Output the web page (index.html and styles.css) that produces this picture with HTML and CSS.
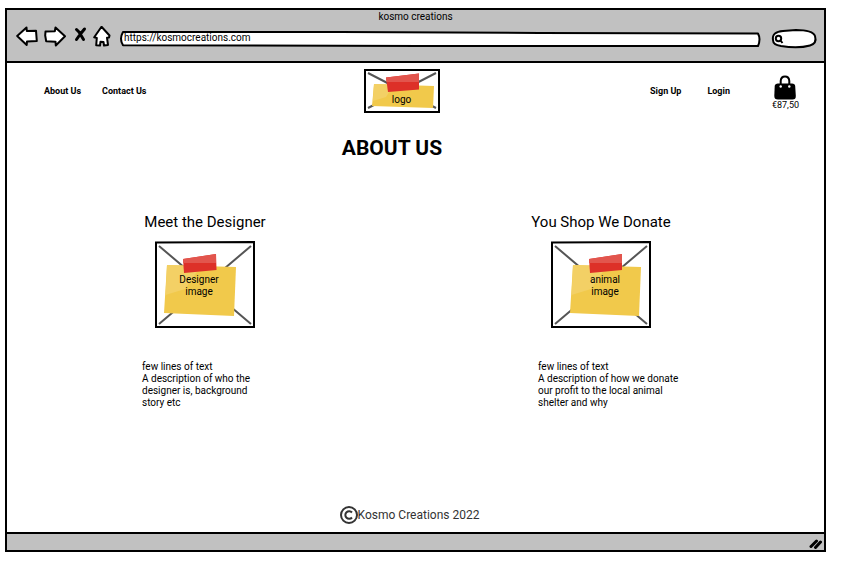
FILE: index.html
```html
<!DOCTYPE html>
<html lang="en">
<head>
<meta charset="utf-8">
<meta name="viewport" content="width=device-width, initial-scale=1">
<title>kosmo creations</title>
<link rel="stylesheet" href="styles.css">
</head>
<body>
<div class="window">
  <div class="chrome">
    <div class="window-title">kosmo creations</div>
    <div class="toolbar">
      <button class="tool" type="button" aria-label="Back">
        <svg width="22" height="22" viewBox="0 0 22 22"><path d="M1.2 10 10.500 1.500 10.800 5 20 4.700 20.800 15 11 15.500 10.700 19Z"/></svg>
      </button>
      <button class="tool" type="button" aria-label="Forward">
        <svg width="22" height="22" viewBox="0 0 22 22"><path d="M1.500 5.500 10.800 5.300 11.500 1.500 21 10.300 11.800 19.500 11.500 15.700 2.200 15.300 1.200 9.500Z"/></svg>
      </button>
      <button class="tool tool-stop" type="button" aria-label="Stop">
        <svg width="14" height="22" viewBox="0 0 14 22"><path class="cross" d="M2.500 3.500 5 6 9.500 13.500M10.500 3 6 8.500 2.500 13.500"/></svg>
      </button>
      <button class="tool" type="button" aria-label="Home">
        <svg width="18" height="22" viewBox="0 0 18 22"><path d="M8.500 .8 16.500 9.500 16 11.500 14 11.700 15 19 11 19.500 10.500 16 7.500 15.700 7 19.500 3.200 19.300 3.800 12 1.200 11.300Z"/></svg>
      </button>
      <div class="address">
        <svg class="outline" viewBox="0 0 641 16" preserveAspectRatio="none"><path d="M3 1 220 1 420 2 638 2.500Q641 8 638 15L300 15 3 14.200Q-1 8 3 1Z"/></svg>
        <input class="address-input" type="text" aria-label="Address" value="https://kosmocreations.com">
      </div>
      <div class="search">
        <svg class="outline" viewBox="0 0 46 20"><path d="M2 11C1 5 5 2.500 12 2L25 1C34 1 42 2 44 7 45.500 12 44 15 39 16.500 30 19 19 18.500 10 17 5 16 2 15 2 11Z"/><circle cx="7.500" cy="9.500" r="2.700"/><path d="M9.500 11.500 11.500 14"/></svg>
        <input class="search-input" type="search" aria-label="Search">
      </div>
    </div>
  </div>

  <header class="site-header">
    <nav class="links" aria-label="Pages">
      <a href="#about">About Us</a>
      <a href="#contact">Contact Us</a>
    </nav>
    <a class="picture logo" href="#home">
      <svg class="drawing" viewBox="0 0 76 44">
        <rect class="frame" x="1" y="1" width="74" height="42"/>
        <path class="cross-line" d="M4 4 72 39M72 4 4 39"/>
        <path class="note" d="M10 15 70 17 69 39 8 37Z"/>
        <path class="note-light" d="M10 15 30 15.600 22 28 8.800 32Z"/>
        <path class="tape" d="M22 8.500 55 4.500 55 20.500 24 23Z"/>
        <path class="tape-light" d="M22 8.500 55 4.500 55 13 22.500 13Z"/>
      </svg>
      <span class="caption">logo</span>
    </a>
    <nav class="links account" aria-label="Account">
      <a href="#signup">Sign Up</a>
      <a href="#login">Login</a>
      <a class="basket" href="#basket" aria-label="Basket, €87,50">
        <svg width="22" height="26" viewBox="0 0 22 26"><path d="M4 8.500H18Q21 8.500 21.200 11L21.800 21Q22 24.500 18.500 24.500H4Q.2 24.500.300 21L.700 11Q1 8.500 4 8.500Z"/><path class="handle" d="M6.700 10V6Q7 1.500 11 1.500T15.300 6V10"/><circle class="rivet" cx="6.700" cy="11.500" r="1.200"/><circle class="rivet" cx="15.300" cy="11.500" r="1.200"/></svg>
        <span>€87,50</span>
      </a>
    </nav>
  </header>

  <main class="content">
    <h1>ABOUT US</h1>
    <div class="columns">
      <section class="column">
        <h2>Meet the Designer</h2>
        <div class="picture designer">
          <svg class="drawing" viewBox="0 0 100 87">
            <path class="frame" d="M1 1.500 99 1 99 86 1 86Z"/>
            <path class="cross-line" d="M4 5 96 83M96 5 4 83"/>
            <path class="note" d="M12 24 81 26 79 75 9 72Z"/>
            <path class="note-light" d="M12 24 46 25 30 48 10.500 54Z"/>
            <path class="tape" d="M28 18 61 13 61.500 29 29 32Z"/>
            <path class="tape-light" d="M28 18 61 13 61 22 28 22Z"/>
          </svg>
          <span class="caption">Designer<br>image</span>
        </div>
        <p>few lines of text<br>A description of who the<br>designer is, background<br>story etc</p>
      </section>
      <section class="column">
        <h2>You Shop We Donate</h2>
        <div class="picture animal">
          <svg class="drawing" viewBox="0 0 100 87">
            <path class="frame" d="M1 1.500 99 1 99 86 1 86Z"/>
            <path class="cross-line" d="M4 5 96 83M96 5 4 83"/>
            <path class="note" d="M22 24 90 26 88 75 19 72Z"/>
            <path class="note-light" d="M22 24 56 25 40 48 20.500 54Z"/>
            <path class="tape" d="M38 18 71 13 71 29 39 32Z"/>
            <path class="tape-light" d="M38 18 71 13 71 22 38 22Z"/>
          </svg>
          <span class="caption">animal<br>image</span>
        </div>
        <p>few lines of text<br>A description of how we donate<br>our profit to the local animal<br>shelter and why</p>
      </section>
    </div>
  </main>

  <footer class="site-footer">
    <svg width="18" height="18" viewBox="0 0 18 18"><circle cx="9" cy="9" r="8"/><path d="M12 6.500A3.800 3.800 0 1 0 12 11.500"/></svg>
    <span>Kosmo Creations 2022</span>
  </footer>

  <div class="status">
    <svg width="13" height="10" viewBox="0 0 13 10"><path d="M2 7.500 7.500 2M6.500 8.500 11.500 3"/></svg>
  </div>
</div>
</body>
</html>
```

FILE: styles.css
```css
* { box-sizing: border-box; }

body {
  margin: 0;
  padding: 8px 18px 16px 5px;
  min-height: 100vh;
  display: flex;
  background: #fff;
  color: #000;
  font: 10px/12px Roboto, "Liberation Sans", sans-serif;
}

h1, h2, p { margin: 0; }
a { color: inherit; text-decoration: none; }
svg { display: block; }

.window {
  flex: 1;
  display: flex;
  flex-direction: column;
  border: 2px solid #000;
}

.chrome {
  padding-bottom: 12px;
  background: #c1c1c1;
  border-bottom: 2px solid #000;
}

.window-title { line-height: 14px; text-align: center; }

.toolbar {
  display: flex;
  align-items: center;
  padding: 0 7px 0 9px;
}

.tool {
  padding: 0;
  margin-right: 6px;
  border: 0;
  background: none;
}
.tool svg {
  fill: #fff;
  stroke: #000;
  stroke-width: 2;
  stroke-linejoin: round;
  stroke-linecap: round;
}
.tool-stop { margin-left: 2px; margin-right: 5px; }
.tool .cross { fill: none; stroke-width: 3; }

.address, .search { position: relative; height: 16px; }
.address { flex: 1; margin: 5px 10px 0 3px; }
.search { width: 46px; height: 20px; margin-top: 5px; }

.outline {
  position: absolute;
  inset: 0;
  width: 100%;
  height: 100%;
  fill: #fff;
  stroke: #000;
  stroke-width: 2;
  stroke-linejoin: round;
  overflow: visible;
}
.outline circle, .outline circle + path { fill: none; }

.address-input, .search-input {
  position: relative;
  display: block;
  width: 100%;
  height: 100%;
  border: 0;
  background: none;
  color: inherit;
  font: inherit;
  outline: none;
}
.address-input { padding: 0 4px 4px; }
.search-input { padding: 0 6px 0 14px; appearance: none; }

.site-header {
  display: grid;
  grid-template-columns: 8fr 76px 9fr;
  align-items: center;
  padding: 6px 25px 0 37px;
}

.links { display: flex; align-items: center; gap: 21px; font-weight: 700; font-size: 9px; }
.account { justify-content: flex-end; gap: 26px; }

.basket {
  display: flex;
  flex-direction: column;
  align-items: center;
  margin: 1px 0 0 16px;
  font-weight: 400;
  line-height: 8px;
}
.basket .handle { fill: none; stroke: #000; stroke-width: 2; }
.basket .rivet { fill: #fff; }

.picture { display: grid; }
.drawing, .caption { grid-area: 1 / 1; }
.drawing { width: 100%; }
.caption { text-align: center; }
.frame { fill: #fff; stroke: #000; stroke-width: 2; }
.cross-line { fill: none; stroke: #555; stroke-width: 2; }
.note { fill: #f1c94b; }
.note-light { fill: #f3d065; }
.tape { fill: #dd3028; }
.tape-light { fill: #e2554d; }

.logo .caption { padding-top: 25px; }
.designer, .animal { width: 100px; margin: 7px auto 33px; }
.designer .caption, .animal .caption { padding-top: 33px; }
.designer .caption { padding-right: 12px; }
.animal .caption { padding-left: 8px; }

.content { flex: 1; padding: 21px 25px 0 0; }

h1 {
  padding-right: 22px;
  font-size: 21px;
  line-height: 28px;
  text-align: center;
}

.columns { display: grid; grid-template-columns: 1fr 1fr; margin-top: 48px; }

h2 {
  font-weight: 400;
  font-size: 15px;
  line-height: 24px;
  text-align: center;
}

.column p { padding-left: 135px; }

.site-footer {
  display: flex;
  justify-content: center;
  align-items: center;
  padding: 0 12px 8px 0;
  color: #333;
  font-size: 12px;
  line-height: 18px;
}
.site-footer svg { fill: none; stroke: #333; stroke-width: 2; }

.status {
  display: flex;
  justify-content: flex-end;
  align-items: center;
  height: 18px;
  padding: 3px 2px 0 0;
  background: #c1c1c1;
  border-top: 2px solid #000;
}
.status svg { fill: none; stroke: #000; stroke-width: 3; stroke-linecap: round; }
```
